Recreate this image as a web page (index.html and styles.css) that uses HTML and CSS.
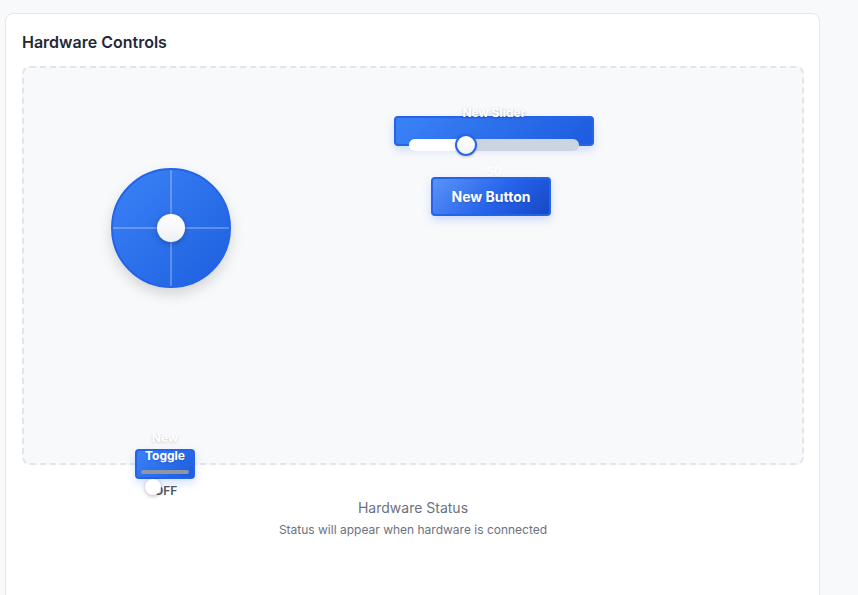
FILE: index.html
```html
<!DOCTYPE html>
<html>
<head>
<meta charset="utf-8">
<link rel="stylesheet" href="styles.css">
</head>
<body>
<div class="card">
  <h2 class="title">Hardware Controls</h2>
  <div class="canvas">
    <div class="ctl slider">
      <div class="ctl-label slider-label">New Slider</div>
      <div class="track"><div class="fill"></div><div class="thumb"></div></div>
      <div class="value">50</div>
    </div>
    <button class="ctl btn">New Button</button>
    <div class="ctl joystick">
      <div class="line-v"></div>
      <div class="line-h"></div>
      <div class="knob"></div>
    </div>
    <div class="ctl toggle">
      <div class="toggle-new">New</div>
      <div class="toggle-label">Toggle</div>
      <div class="toggle-bar"></div>
      <div class="toggle-knob"></div>
      <div class="toggle-state">OFF</div>
    </div>
  </div>
  <div class="status">
    <div class="status-title">Hardware Status</div>
    <div class="status-sub">Status will appear when hardware is connected</div>
  </div>
</div>
</body>
</html>
```
FILE: styles.css
```css
html, body {
  margin: 0;
  padding: 0;
  background: #f8f9fb;
  font-family: Inter, "Liberation Sans", sans-serif;
  overflow: hidden;
}
body {
  padding: 13px 0 0 5px;
  height: 595px;
  box-sizing: border-box;
}
.card {
  width: 815px;
  height: 600px;
  box-sizing: border-box;
  background: #fff;
  border: 1px solid #e5e7eb;
  border-radius: 8px;
  padding: 17px 15px 0 16px;
}
.title {
  margin: 0;
  font-size: 16px;
  font-weight: 600;
  line-height: 22px;
  color: #1f2937;
}
.canvas {
  position: relative;
  margin-top: 13px;
  height: 399px;
  box-sizing: border-box;
  border: 2px dashed #e2e5ea;
  border-radius: 8px;
  background: #f8f9fb;
}
.ctl { position: absolute; }
.slider {
  left: 370px;
  top: 48px;
  width: 200px;
  height: 30px;
  box-sizing: border-box;
  border-radius: 4px;
  background: linear-gradient(135deg, #3b82f6, #1d5be0);
  border: 2px solid #2563eb;
  box-shadow: 0 4px 10px rgba(37, 99, 235, 0.2);
}
.slider-label {
  position: absolute;
  left: 0; right: 0;
  top: -12px;
  text-align: center;
  font-size: 12px;
  font-weight: 700;
  color: #fff;
  line-height: 14px;
  text-shadow: 0 1px 3px rgba(0,0,0,0.25);
}
.track {
  position: absolute;
  left: 13px;
  top: 21px;
  width: 170px;
  height: 12px;
  border-radius: 6px;
  background: #cbd5e1;
}
.fill {
  position: absolute;
  left: 0; top: 0; bottom: 0;
  width: 58px;
  border-radius: 6px 0 0 6px;
  background: #fff;
}
.thumb {
  position: absolute;
  left: 46px;
  top: -5px;
  width: 18px;
  height: 18px;
  border-radius: 50%;
  background: linear-gradient(180deg, #fff, #f1f3f6);
  border: 2px solid #2563eb;
  box-shadow: 0 1px 3px rgba(0,0,0,0.2);
}
.value {
  position: absolute;
  left: 0; right: 0;
  top: 47px;
  text-align: center;
  font-size: 12px;
  font-weight: 700;
  color: #fff;
  line-height: 14px;
  text-shadow: 0 1px 2px rgba(0,0,0,0.06);
}
.btn {
  left: 407px;
  top: 109px;
  width: 120px;
  height: 39px;
  box-sizing: border-box;
  border: 2px solid #2563eb;
  border-radius: 4px;
  background: linear-gradient(135deg, #5b93f6, #2563eb 55%, #1748c5);
  color: #fff;
  font-family: Inter, "Liberation Sans", sans-serif;
  font-size: 14px;
  font-weight: 700;
  text-shadow: 0 1px 2px rgba(0,0,0,0.2);
  box-shadow: 0 4px 10px rgba(37, 99, 235, 0.2);
  padding: 0;
}
.joystick {
  left: 87px;
  top: 100px;
  width: 120px;
  height: 120px;
  box-sizing: border-box;
  border-radius: 50%;
  border: 2px solid #2563eb;
  background: linear-gradient(135deg, #3b82f6, #1d5fdf);
  box-shadow: 0 6px 14px rgba(0,0,0,0.15);
}
.line-v {
  position: absolute;
  left: 57px;
  top: 0; bottom: 0;
  width: 2px;
  background: rgba(255,255,255,0.25);
}
.line-h {
  position: absolute;
  top: 57px;
  left: 0; right: 0;
  height: 2px;
  background: rgba(255,255,255,0.25);
}
.knob {
  position: absolute;
  left: 44px;
  top: 44px;
  width: 28px;
  height: 28px;
  border-radius: 50%;
  background: linear-gradient(180deg, #fff, #eef0f3);
  box-shadow: 0 2px 6px rgba(0,0,0,0.25);
}
.toggle {
  left: 111px;
  top: 381px;
  width: 60px;
  height: 30px;
  box-sizing: border-box;
  border-radius: 4px;
  background: linear-gradient(135deg, #3b82f6, #1d5be0);
  border: 2px solid #2563eb;
  box-shadow: 0 4px 10px rgba(37, 99, 235, 0.2);
}
.toggle-new {
  position: absolute;
  left: 0; right: 0;
  top: -20px;
  text-align: center;
  font-size: 12px;
  font-weight: 700;
  line-height: 14px;
  color: #fff;
  text-shadow: 0 1px 3px rgba(0,0,0,0.18);
}
.toggle-label {
  position: absolute;
  left: 0; right: 0;
  top: -2px;
  text-align: center;
  font-size: 12px;
  font-weight: 700;
  line-height: 14px;
  color: #fff;
  text-shadow: 0 1px 2px rgba(0,0,0,0.15);
}
.toggle-bar {
  position: absolute;
  left: 4px;
  right: 4px;
  top: 19px;
  height: 4px;
  border-radius: 2px;
  background: #8e96a3;
}
.toggle-state {
  position: absolute;
  left: 17px;
  top: 33px;
  font-size: 12px;
  font-weight: 600;
  line-height: 14px;
  color: #4b5563;
}
.toggle-knob {
  position: absolute;
  left: 8px;
  top: 28px;
  width: 16px;
  height: 16px;
  border-radius: 50%;
  background: #fff;
  box-shadow: 0 1px 4px rgba(0,0,0,0.3);
  z-index: 1;
}
.status {
  text-align: center;
  margin-top: 33px;
}
.status-title {
  font-size: 14px;
  color: #6b7280;
  line-height: 20px;
}
.status-sub {
  font-size: 12px;
  color: #6b7280;
  line-height: 16px;
  margin-top: 4px;
}
```
